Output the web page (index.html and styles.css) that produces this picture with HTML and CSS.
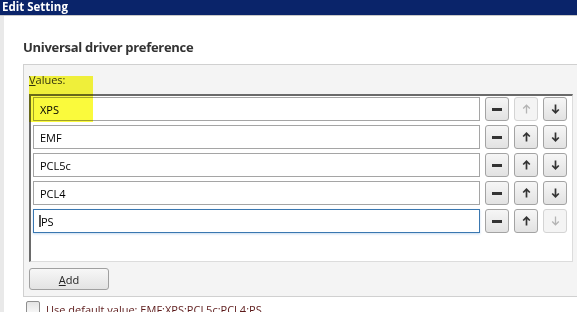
FILE: index.html
```html
<!DOCTYPE html>
<html lang="en">
<head>
    <meta charset="UTF-8">
    <meta name="viewport" content="width=device-width, initial-scale=1.0">
    <title>Edit Setting</title>
    <link rel="stylesheet" href="styles.css">
</head>
<body>
    <div class="titlebar">Edit Setting</div>
    <div class="main">
        <div class="header">
            <h2 class="heading">Universal driver preference</h2>
        </div>
        <div class="panel">
            <div class="values-label"><u>V</u>alues:</div>
            <div class="listbox">
                <div class="row">
                    <div class="field">XPS</div>
                    <button class="icon-btn"><span class="minus"></span></button>
                    <button class="icon-btn disabled">
                        <svg width="9" height="10" viewBox="0 0 9 10"><path d="M4.5 9.5V1.2M1.2 4.5L4.5 1.2L7.8 4.5"/></svg>
                    </button>
                    <button class="icon-btn">
                        <svg width="9" height="10" viewBox="0 0 9 10"><path d="M4.5 0.5V8.8M1.2 5.5L4.5 8.8L7.8 5.5"/></svg>
                    </button>
                </div>
                <div class="row">
                    <div class="field">EMF</div>
                    <button class="icon-btn"><span class="minus"></span></button>
                    <button class="icon-btn">
                        <svg width="9" height="10" viewBox="0 0 9 10"><path d="M4.5 9.5V1.2M1.2 4.5L4.5 1.2L7.8 4.5"/></svg>
                    </button>
                    <button class="icon-btn">
                        <svg width="9" height="10" viewBox="0 0 9 10"><path d="M4.5 0.5V8.8M1.2 5.5L4.5 8.8L7.8 5.5"/></svg>
                    </button>
                </div>
                <div class="row">
                    <div class="field">PCL5c</div>
                    <button class="icon-btn"><span class="minus"></span></button>
                    <button class="icon-btn">
                        <svg width="9" height="10" viewBox="0 0 9 10"><path d="M4.5 9.5V1.2M1.2 4.5L4.5 1.2L7.8 4.5"/></svg>
                    </button>
                    <button class="icon-btn">
                        <svg width="9" height="10" viewBox="0 0 9 10"><path d="M4.5 0.5V8.8M1.2 5.5L4.5 8.8L7.8 5.5"/></svg>
                    </button>
                </div>
                <div class="row">
                    <div class="field">PCL4</div>
                    <button class="icon-btn"><span class="minus"></span></button>
                    <button class="icon-btn">
                        <svg width="9" height="10" viewBox="0 0 9 10"><path d="M4.5 9.5V1.2M1.2 4.5L4.5 1.2L7.8 4.5"/></svg>
                    </button>
                    <button class="icon-btn">
                        <svg width="9" height="10" viewBox="0 0 9 10"><path d="M4.5 0.5V8.8M1.2 5.5L4.5 8.8L7.8 5.5"/></svg>
                    </button>
                </div>
                <div class="row">
                    <div class="field focused"><span class="caret"></span>PS</div>
                    <button class="icon-btn"><span class="minus"></span></button>
                    <button class="icon-btn">
                        <svg width="9" height="10" viewBox="0 0 9 10"><path d="M4.5 9.5V1.2M1.2 4.5L4.5 1.2L7.8 4.5"/></svg>
                    </button>
                    <button class="icon-btn disabled">
                        <svg width="9" height="10" viewBox="0 0 9 10"><path d="M4.5 0.5V8.8M1.2 5.5L4.5 8.8L7.8 5.5"/></svg>
                    </button>
                </div>
            </div>
            <button class="add-btn"><u>A</u>dd</button>
        </div>
        <div class="default-row">
            <span class="checkbox"></span>
            <span class="default-text">Use default value: EMF;XPS;PCL5c;PCL4;PS</span>
        </div>
    </div>
    <div class="highlight"></div>
</body>
</html>
```

FILE: styles.css
```css
body {
    font-family: "Open Sans", "Noto Sans", sans-serif;
    font-size: 11px;
    margin: 0;
    padding: 0;
    width: 577px;
    height: 312px;
    overflow: hidden;
    background-color: #fff;
    position: relative;
}
.titlebar {
    height: 16px;
    line-height: 14px;
    background-color: #0a246a;
    color: #fff;
    font-weight: bold;
    font-size: 11.5px;
    padding-left: 2px;
    border-bottom: 1px solid #c8c8c8;
    box-sizing: border-box;
}
.main {
    border-left: 4px solid #e9e9e9;
    height: 296px;
}
.header {
    height: 48px;
    padding: 22px 0 0 19px;
    box-sizing: border-box;
}
.heading {
    margin: 0;
    font-size: 13px;
    line-height: 18px;
    font-weight: bold;
    letter-spacing: -0.3px;
    color: #333;
}
.panel {
    margin-left: 19px;
    background-color: #f4f4f4;
    border-top: 1px solid #d0d0d0;
    border-left: 1px solid #d0d0d0;
    border-bottom: 1px solid #d0d0d0;
    padding: 7px 0 6px 5px;
}
.values-label {
    line-height: 15px;
    color: #333;
    margin-bottom: 7px;
}
.listbox {
    width: 544px;
    box-sizing: border-box;
    background-color: #fff;
    border-top: 2px solid #6a6a6a;
    border-left: 2px solid #6a6a6a;
    border-right: 1px solid #dcdcdc;
    border-bottom: 1px solid #dcdcdc;
    padding: 1px 5px 28px 2px;
    display: flex;
    flex-direction: column;
    gap: 4px;
}
.row {
    display: flex;
    align-items: center;
    gap: 5px;
    height: 24px;
}
.field {
    flex: 1;
    height: 24px;
    box-sizing: border-box;
    border: 1px solid #a5a5a5;
    background-color: #fff;
    padding-left: 6px;
    display: flex;
    align-items: center;
    color: #000;
}
.field.focused {
    border-color: #3a77b0;
    box-shadow: 0 1px 2px rgba(90, 150, 210, 0.35);
    padding-left: 5px;
}
.caret {
    display: inline-block;
    width: 2px;
    height: 12px;
    background-color: #555;
}
.icon-btn {
    width: 24px;
    height: 24px;
    padding: 0;
    box-sizing: border-box;
    border: 1px solid #a3a3a3;
    border-radius: 3px;
    background: linear-gradient(#f6f6f6, #e2e2e2);
    display: flex;
    align-items: center;
    justify-content: center;
}
.icon-btn svg path {
    fill: none;
    stroke: #333;
    stroke-width: 1.7;
}
.icon-btn.disabled {
    border-color: #d4d4d4;
    background: #f4f4f4;
}
.icon-btn.disabled svg path {
    stroke: #b4b4b4;
    stroke-width: 1.3;
}
.minus {
    display: block;
    width: 10px;
    height: 3px;
    background-color: #333;
}
.add-btn {
    display: block;
    margin-top: 6px;
    width: 80px;
    height: 22px;
    padding: 0;
    border: 1px solid #a0a0a0;
    border-radius: 3px;
    background: linear-gradient(#f7f7f7, #e3e3e3);
    font-family: "Open Sans", "Noto Sans", sans-serif;
    font-size: 11px;
    color: #222;
}
.default-row {
    display: flex;
    align-items: flex-start;
    margin-top: 4px;
    padding-left: 22px;
}
.checkbox {
    width: 12px;
    height: 12px;
    border: 1px solid #8f8f8f;
    border-radius: 2px;
    background: linear-gradient(#e4e4e4, #fafafa);
    margin-right: 6px;
}
.default-text {
    line-height: 15px;
    margin-top: 1px;
    color: #5c1a1a;
}
.highlight {
    position: absolute;
    left: 29px;
    top: 76px;
    width: 64px;
    height: 46px;
    background-color: #fafa3c;
    mix-blend-mode: multiply;
}
```
